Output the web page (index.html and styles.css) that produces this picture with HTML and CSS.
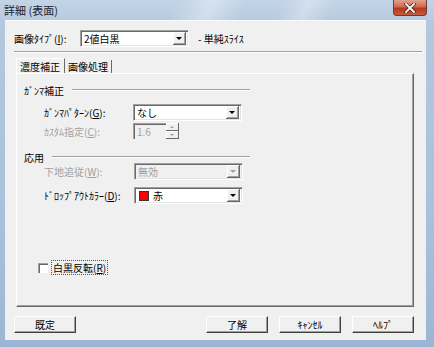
FILE: index.html
```html
<!DOCTYPE html>
<html lang="ja">
<head>
    <meta charset="UTF-8">
    <title>詳細 (表面)</title>
    <link rel="stylesheet" href="styles.css">
</head>
<body>
    <div class="window">
        <div class="titlebar">
            <span class="title">詳細 (表面)</span>
            <div class="close">
                <svg width="12" height="10" viewBox="0 0 12 10">
                    <path d="M2 1 L10 9 M10 1 L2 9" stroke="#3a1a14" stroke-width="3.2" stroke-linecap="square"/>
                    <path d="M2 1 L10 9 M10 1 L2 9" stroke="#ffffff" stroke-width="1.8" stroke-linecap="square"/>
                </svg>
            </div>
        </div>
        <div class="frame">
            <div class="client">
                <div class="type-row">
                    <span class="type-label">画像ﾀｲﾌﾟ(<u>I</u>):</span>
                    <div class="combo type-combo">
                        <span class="combo-text">2値白黒</span>
                        <span class="drop"><i class="arrow"></i></span>
                    </div>
                    <span class="type-note">- 単純ｽﾗｲｽ</span>
                </div>
                <div class="etched"></div>

                <div class="tabs">
                    <div class="tab active">濃度補正</div>
                    <div class="tab">画像処理</div>
                </div>
                <div class="panel">
                    <div class="group-head">
                        <span>ｶﾞﾝﾏ補正</span>
                        <i class="rule"></i>
                    </div>
                    <div class="field gamma-row">
                        <span class="field-label">ｶﾞﾝﾏﾊﾟﾀｰﾝ(<u>G</u>):</span>
                        <div class="combo">
                            <span class="combo-text">なし</span>
                            <span class="drop"><i class="arrow"></i></span>
                        </div>
                    </div>
                    <div class="field custom-row">
                        <span class="field-label disabled">ｶｽﾀﾑ指定(<u>C</u>):</span>
                        <div class="spin">
                            <span class="spin-text">1.6</span>
                        </div>
                        <div class="spin-btns">
                            <span class="spin-btn"><i class="tiny up"></i></span>
                            <span class="spin-btn"><i class="tiny down"></i></span>
                        </div>
                    </div>

                    <div class="group-head second">
                        <span>応用</span>
                        <i class="rule"></i>
                    </div>
                    <div class="field under-row">
                        <span class="field-label disabled">下地追従(<u>W</u>):</span>
                        <div class="combo off">
                            <span class="combo-text">無効</span>
                            <span class="drop"><i class="arrow"></i></span>
                        </div>
                    </div>
                    <div class="field drop-row">
                        <span class="field-label">ﾄﾞﾛｯﾌﾟｱｳﾄｶﾗｰ(<u>D</u>):</span>
                        <div class="combo">
                            <span class="swatch"></span>
                            <span class="combo-text">赤</span>
                            <span class="drop"><i class="arrow"></i></span>
                        </div>
                    </div>

                    <div class="check-row">
                        <span class="checkbox"></span>
                        <span class="check-label">白黒反転(<u>R</u>)</span>
                    </div>
                </div>

                <div class="buttons">
                    <button class="btn">既定</button>
                    <div class="right-buttons">
                        <button class="btn">了解</button>
                        <button class="btn">ｷｬﾝｾﾙ</button>
                        <button class="btn">ﾍﾙﾌﾟ</button>
                    </div>
                </div>
            </div>
        </div>
    </div>
</body>
</html>
```

FILE: styles.css
```css
body {
    margin: 0;
    padding: 0;
    font-family: "Noto Sans CJK JP", "Noto Sans", sans-serif;
    font-size: 10px;
    color: #000;
    background: #ffffff;
}

.window {
    width: 434px;
    height: 347px;
    display: flex;
    flex-direction: column;
    background: linear-gradient(180deg, #b4c9df 0%, #a9c1dc 60%, #9bb6d4 100%);
}

/* title bar, glass look */
.titlebar {
    height: 20px;
    display: flex;
    align-items: flex-start;
    padding-left: 4px;
    background:
        linear-gradient(115deg, rgba(255,255,255,0) 40%, rgba(255,255,255,0.35) 48%, rgba(255,255,255,0) 56%),
        linear-gradient(115deg, rgba(255,255,255,0) 64%, rgba(255,255,255,0.3) 70%, rgba(255,255,255,0) 76%),
        linear-gradient(180deg, #c3d4e6 0%, #b7cbe1 100%);
}

.title {
    line-height: 20px;
    font-size: 11px;
    color: #1b2430;
}

.close {
    margin-left: auto;
    margin-right: 7px;
    width: 34px;
    height: 16px;
    display: flex;
    align-items: center;
    justify-content: center;
    border: 1px solid #6e3a33;
    border-top: none;
    border-radius: 0 0 4px 4px;
    background: linear-gradient(180deg, #e3a190 0%, #cf6a52 45%, #b8361e 55%, #c95a3c 100%);
    box-sizing: border-box;
}

.frame {
    flex: 1;
    padding: 0 8px 7px 5px;
    display: flex;
}

.client {
    flex: 1;
    background: #f0f0f0;
    padding: 10px 4px 0 9px;
    box-shadow: inset 0 1px 0 #fafafa;
}

/* top row */
.type-row {
    display: flex;
    align-items: center;
    height: 17px;
}

.type-label {
    width: 66px;
}

.type-combo {
    width: 114px;
}

.type-note {
    margin-left: 9px;
}

.etched {
    margin-top: 4px;
    border-top: 1px solid #a0a0a0;
    border-bottom: 1px solid #ffffff;
}

/* combo boxes */
.combo {
    display: flex;
    align-items: center;
    width: 109px;
    height: 17px;
    box-sizing: border-box;
    background: #fff;
    border-top: 1px solid #a0a0a0;
    border-left: 1px solid #a0a0a0;
    border-right: 1px solid #ffffff;
    border-bottom: 1px solid #ffffff;
    box-shadow: inset 1px 1px 0 #696969, inset -1px -1px 0 #e3e3e3;
    padding: 2px 2px 2px 2px;
}

.combo-text {
    flex: 1;
    padding-left: 1px;
    line-height: 13px;
}

.drop {
    width: 13px;
    height: 13px;
    box-sizing: border-box;
    background: #f0f0f0;
    border-right: 1px solid #696969;
    border-bottom: 1px solid #696969;
    box-shadow: inset 1px 1px 0 #ffffff, inset -1px -1px 0 #a0a0a0;
    display: flex;
    align-items: center;
    justify-content: center;
}

.arrow {
    width: 0;
    height: 0;
    border-left: 3px solid transparent;
    border-right: 3px solid transparent;
    border-top: 3px solid #000;
    margin-top: 1px;
}

.combo.off {
    background: #f0f0f0;
    color: #a0a0a0;
}

.combo.off .arrow {
    border-top-color: #a0a0a0;
}

.swatch {
    width: 10px;
    height: 10px;
    margin-left: 2px;
    margin-right: 3px;
    background: #ff0000;
    border: 1px solid #333;
    box-sizing: border-box;
}

/* tabs */
.tabs {
    display: flex;
    align-items: flex-end;
    margin-top: 5px;
    margin-left: 2px;
    height: 15px;
}

.tab {
    height: 13px;
    line-height: 13px;
    padding: 0 3px;
    box-sizing: border-box;
    border-right: 1px solid #696969;
    background: #f0f0f0;
    white-space: nowrap;
}

.tab.active {
    height: 15px;
    line-height: 15px;
    border-left: 1px solid #ffffff;
    border-top: 1px solid #ffffff;
    padding: 0 4px 0 3px;
}

.panel {
    margin-left: 2px;
    width: 398px;
    height: 234px;
    box-sizing: border-box;
    border-top: 1px solid #ffffff;
    border-left: 1px solid #ffffff;
    border-right: 1px solid #696969;
    border-bottom: 1px solid #696969;
    box-shadow: inset -1px -1px 0 #a0a0a0;
    padding: 10px 0 0 7px;
}

.group-head {
    display: flex;
    align-items: center;
    width: 226px;
    height: 12px;
}

.group-head.second {
    margin-top: 12px;
}

.rule {
    flex: 1;
    margin-left: 8px;
    border-top: 1px solid #a0a0a0;
    border-bottom: 1px solid #ffffff;
}

.field {
    display: flex;
    align-items: center;
    margin-left: 20px;
}

.field-label {
    width: 89px;
}

.disabled {
    color: #a0a0a0;
}

.gamma-row {
    margin-top: 8px;
}

.custom-row {
    margin-top: 2px;
}

.under-row .field-label,
.drop-row .field-label {
    width: 90px;
}

.drop-row {
    margin-top: 7px;
}

.spin {
    width: 33px;
    height: 16px;
    box-sizing: border-box;
    border-top: 1px solid #a0a0a0;
    border-left: 1px solid #a0a0a0;
    box-shadow: inset 1px 1px 0 #696969;
    color: #a0a0a0;
    padding: 1px 0 0 3px;
    line-height: 13px;
}

.spin-btns {
    display: flex;
    flex-direction: column;
    height: 16px;
}

.spin-btn {
    width: 13px;
    height: 8px;
    box-sizing: border-box;
    background: #f0f0f0;
    border-right: 1px solid #696969;
    border-bottom: 1px solid #696969;
    box-shadow: inset 1px 1px 0 #ffffff;
    display: flex;
    align-items: center;
    justify-content: center;
}

.tiny {
    width: 0;
    height: 0;
    border-left: 2px solid transparent;
    border-right: 2px solid transparent;
}

.tiny.up {
    border-bottom: 2px solid #a0a0a0;
}

.tiny.down {
    border-top: 2px solid #a0a0a0;
}

.check-row {
    display: flex;
    align-items: center;
    margin-top: 57px;
    margin-left: 14px;
}

.checkbox {
    width: 10px;
    height: 10px;
    box-sizing: border-box;
    background: #fff;
    border-top: 1px solid #a0a0a0;
    border-left: 1px solid #a0a0a0;
    box-shadow: inset 1px 1px 0 #696969;
}

.check-label {
    margin-left: 4px;
    padding: 0 1px;
    outline: 1px dotted #555;
    line-height: 13px;
}

/* bottom buttons */
.buttons {
    display: flex;
    justify-content: space-between;
    margin-top: 9px;
    width: 400px;
}

.right-buttons {
    display: flex;
    gap: 11px;
}

.btn {
    width: 62px;
    height: 17px;
    padding: 0;
    font-family: "Noto Sans CJK JP", "Noto Sans", sans-serif;
    font-size: 10px;
    background: #f0f0f0;
    border-top: 1px solid #ffffff;
    border-left: 1px solid #ffffff;
    border-right: 1px solid #404040;
    border-bottom: 1px solid #404040;
    box-shadow: inset -1px -1px 0 #a0a0a0;
    box-sizing: border-box;
    color: #000;
}
```
